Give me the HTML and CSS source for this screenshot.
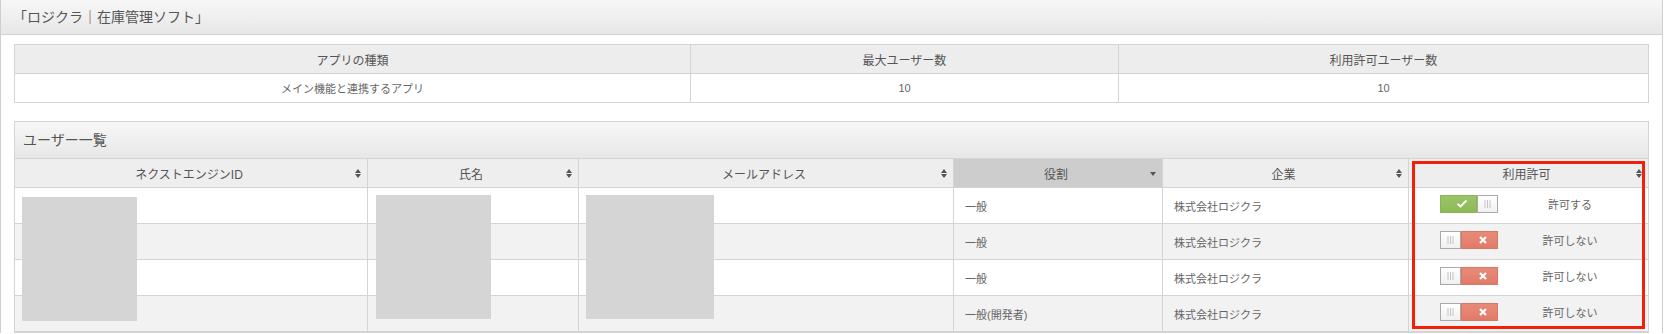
FILE: index.html
```html
<!DOCTYPE html>
<html lang="ja">
<head>
  <meta charset="UTF-8" />
  <title>ロジクラ | 在庫管理ソフト</title>
  <link rel="stylesheet" href="styles.css">
</head>
<body>
  <div class="panel">
    <div class="panel-head">「ロジクラ｜在庫管理ソフト」</div>
    <div class="panel-body">
      <table class="summary">
        <thead>
          <tr>
            <th class="c-app">アプリの種類</th>
            <th class="c-max">最大ユーザー数</th>
            <th>利用許可ユーザー数</th>
          </tr>
        </thead>
        <tbody>
          <tr>
            <td>メイン機能と連携するアプリ</td>
            <td>10</td>
            <td>10</td>
          </tr>
        </tbody>
      </table>

      <div class="box">
        <div class="box-head">ユーザー一覧</div>
        <div class="users-wrap">
          <table class="users">
            <thead>
              <tr>
                <th class="c-id"><div class="th-in"><span>ネクストエンジンID</span><svg class="sort" viewBox="0 0 6 9"><path d="M0 4 3 0 6 4Z M0 5 3 9 6 5Z"/></svg></div></th>
                <th class="c-name"><div class="th-in"><span>氏名</span><svg class="sort" viewBox="0 0 6 9"><path d="M0 4 3 0 6 4Z M0 5 3 9 6 5Z"/></svg></div></th>
                <th class="c-mail"><div class="th-in"><span>メールアドレス</span><svg class="sort" viewBox="0 0 6 9"><path d="M0 4 3 0 6 4Z M0 5 3 9 6 5Z"/></svg></div></th>
                <th class="c-role sorted"><div class="th-in"><span>役割</span><svg class="sort" viewBox="0 0 6 9"><path d="M0 3 6 3 3 7Z"/></svg></div></th>
                <th class="c-corp"><div class="th-in"><span>企業</span><svg class="sort" viewBox="0 0 6 9"><path d="M0 4 3 0 6 4Z M0 5 3 9 6 5Z"/></svg></div></th>
                <th><div class="th-in"><span>利用許可</span><svg class="sort" viewBox="0 0 6 9"><path d="M0 4 3 0 6 4Z M0 5 3 9 6 5Z"/></svg></div></th>
              </tr>
            </thead>
            <tbody>
              <tr>
                <td></td><td></td><td></td>
                <td>一般</td>
                <td>株式会社ロジクラ</td>
                <td class="perm">
                  <div class="perm-in">
                    <span class="switch on">
                      <span class="face"><svg viewBox="0 0 12 9"><path d="M1.5 4.8 4.5 7.5 10.5 1.5"/></svg></span>
                      <span class="knob"><svg viewBox="0 0 7 8"><path d="M1 0V8M3.5 0V8M6 0V8"/></svg></span>
                    </span>
                    <span class="perm-label">許可する</span>
                  </div>
                </td>
              </tr>
              <tr>
                <td></td><td></td><td></td>
                <td>一般</td>
                <td>株式会社ロジクラ</td>
                <td class="perm">
                  <div class="perm-in">
                    <span class="switch off">
                      <span class="knob"><svg viewBox="0 0 7 8"><path d="M1 0V8M3.5 0V8M6 0V8"/></svg></span>
                      <span class="face"><svg viewBox="0 0 8 8"><path d="M1 1 7 7M7 1 1 7"/></svg></span>
                    </span>
                    <span class="perm-label">許可しない</span>
                  </div>
                </td>
              </tr>
              <tr>
                <td></td><td></td><td></td>
                <td>一般</td>
                <td>株式会社ロジクラ</td>
                <td class="perm">
                  <div class="perm-in">
                    <span class="switch off">
                      <span class="knob"><svg viewBox="0 0 7 8"><path d="M1 0V8M3.5 0V8M6 0V8"/></svg></span>
                      <span class="face"><svg viewBox="0 0 8 8"><path d="M1 1 7 7M7 1 1 7"/></svg></span>
                    </span>
                    <span class="perm-label">許可しない</span>
                  </div>
                </td>
              </tr>
              <tr>
                <td></td><td></td><td></td>
                <td>一般(開発者)</td>
                <td>株式会社ロジクラ</td>
                <td class="perm">
                  <div class="perm-in">
                    <span class="switch off">
                      <span class="knob"><svg viewBox="0 0 7 8"><path d="M1 0V8M3.5 0V8M6 0V8"/></svg></span>
                      <span class="face"><svg viewBox="0 0 8 8"><path d="M1 1 7 7M7 1 1 7"/></svg></span>
                    </span>
                    <span class="perm-label">許可しない</span>
                  </div>
                </td>
              </tr>
            </tbody>
          </table>

          <!-- redacted personal data -->
          <div class="redact r-id"></div>
          <div class="redact r-name"></div>
          <div class="redact r-mail"></div>

          <div class="highlight"></div>
        </div>
      </div>
    </div>
  </div>
</body>
</html>
```

FILE: styles.css
```css
* {
  box-sizing: border-box;
}
body {
  margin: 0;
  font-family: "Liberation Sans", "Noto Sans CJK JP", sans-serif;
  color: #555;
  background: #fff;
  overflow: hidden;
}
.panel {
  width: 1663px;
  border-left: 1px solid #cfcfcf;
  border-right: 1px solid #cfcfcf;
}
.panel-head {
  height: 35px;
  padding-left: 12px;
  line-height: 34px;
  font-size: 14px;
  color: #555;
  background: linear-gradient(#f7f7f7, #e7e7e7);
  border-bottom: 1px solid #d2d2d2;
}
.panel-body {
  padding: 9px 13px 0;
}

/* summary table */
.summary {
  width: 100%;
  table-layout: fixed;
  border-collapse: separate;
  border-spacing: 0;
  border: 1px solid #d4d4d4;
}
.summary th,
.summary td {
  padding: 0 8px;
  text-align: center;
  font-weight: normal;
  border-right: 1px solid #d4d4d4;
}
.summary th:last-child,
.summary td:last-child {
  border-right: none;
}
.summary th {
  height: 29px;
  font-size: 12px;
  background: #ededed;
  border-bottom: 1px solid #d4d4d4;
}
.summary td {
  height: 28px;
  font-size: 11px;
  color: #666;
}
.summary .c-app {
  width: 676px;
}
.summary .c-max {
  width: 428px;
}

/* users box */
.box {
  margin-top: 18px;
  border: 1px solid #d4d4d4;
}
.box-head {
  height: 37px;
  padding-left: 8px;
  line-height: 36px;
  font-size: 14px;
  background: linear-gradient(#f7f7f7, #e7e7e7);
  border-bottom: 1px solid #d4d4d4;
}
.users-wrap {
  position: relative;
}
.users {
  width: 100%;
  table-layout: fixed;
  border-collapse: separate;
  border-spacing: 0;
}
.users th,
.users td {
  border-right: 1px solid #d4d4d4;
  border-bottom: 1px solid #d4d4d4;
}
.users th:last-child,
.users td:last-child {
  border-right: none;
}
.users th {
  height: 29px;
  padding: 0 4px 0 0;
  font-size: 12px;
  font-weight: normal;
  background: #eeeeee;
}
.users th.sorted {
  background: #cdcdcd;
}
.th-in {
  display: grid;
  grid-template-columns: 10px 1fr 10px;
  align-items: center;
}
.th-in span {
  grid-column: 2;
  text-align: center;
}
.sort {
  grid-column: 3;
  justify-self: center;
  width: 6px;
  height: 9px;
  fill: #555;
}
.users .c-id { width: 353px; }
.users .c-name { width: 211px; }
.users .c-mail { width: 375px; }
.users .c-role { width: 209px; }
.users .c-corp { width: 246px; }

.users td {
  height: 36px;
  padding: 0 11px;
  font-size: 11px;
  color: #666;
  background: #fff;
}
.users tbody tr:nth-child(even) td {
  background: #f2f2f2;
}

/* permission switch */
.users td.perm {
  padding: 0 0 4px 31px;
}
.perm-in {
  display: flex;
  align-items: center;
}
.perm-label {
  width: 144px;
  text-align: center;
  font-size: 11px;
  color: #666;
}
.switch {
  display: flex;
  width: 58px;
  height: 18px;
}
.switch .knob {
  width: 21px;
  display: flex;
  align-items: center;
  justify-content: center;
  background: linear-gradient(#ffffff, #f0f0f0);
  border: 1px solid #a9a9a9;
}
.switch .knob svg {
  width: 7px;
  height: 8px;
  stroke: #c4c4c4;
  stroke-width: 1;
  fill: none;
}
.switch .face {
  flex: 1;
  display: flex;
  align-items: center;
  justify-content: center;
  padding-left: 6px;
}
.switch.on .face {
  background: linear-gradient(#9cc567, #8cb956);
  border: 1px solid #8ab555;
}
.switch.on .face svg {
  width: 12px;
  height: 9px;
  stroke: #fff;
  stroke-width: 1.8;
  fill: none;
}
.switch.off .face {
  background: linear-gradient(#e98b79, #e07b68);
  border: 1px solid #d97764;
}
.switch.off .face svg {
  width: 8px;
  height: 8px;
  stroke: #fff;
  stroke-width: 2.2;
  fill: none;
}

/* overlays */
.redact {
  position: absolute;
  background: #d5d5d5;
  height: 124px;
}
.r-id {
  left: 7px;
  top: 38px;
  width: 115px;
}
.r-name {
  left: 361px;
  top: 36px;
  width: 115px;
}
.r-mail {
  left: 571px;
  top: 36px;
  width: 128px;
}
.highlight {
  position: absolute;
  left: 1397px;
  top: 2px;
  width: 233px;
  height: 168px;
  border: 3px solid #f2200b;
}
```
